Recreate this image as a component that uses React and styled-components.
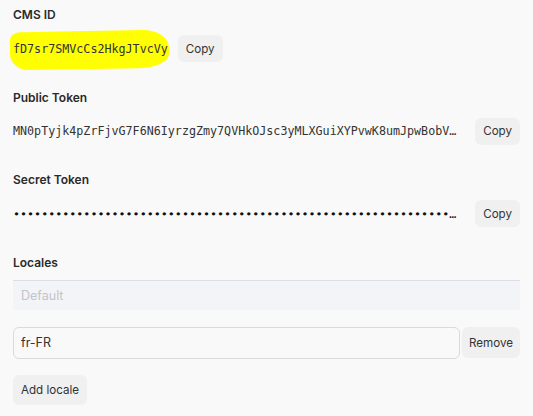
import React from "react";
import styled, { createGlobalStyle } from "styled-components";

const Global = createGlobalStyle`
  html, body { margin: 0; padding: 0; background: #f9f9f9; }
  body { font-family: Inter, "Noto Sans", sans-serif; color: #2b2b2b; }
  * { box-sizing: border-box; }
`;

const Page = styled.div`
  padding: 7px 13px 10px 13px;
  display: flex;
  flex-direction: column;
  gap: 27.5px;
  width: 533px;
`;

const Section = styled.section`
  display: flex;
  flex-direction: column;
  gap: ${(p) => p.$gap || 12}px;
`;

const Label = styled.div`
  font-size: 12px;
  font-weight: 600;
  line-height: 16px;
  color: #2a2a2a;
`;

const Row = styled.div`
  display: flex;
  align-items: center;
  gap: ${(p) => p.$gap || 10}px;
  height: 27px;
`;

const Mono = styled.span`
  font-family: "DejaVu Sans Mono", "Liberation Mono", monospace;
  font-size: 11.7px;
  color: ${(p) => (p.$secret ? "#111" : "#333")};
  white-space: nowrap;
  overflow: hidden;
  text-overflow: ellipsis;
  min-width: 0;
  ${(p) => (p.$fill ? "flex: 1;" : "")}
`;

const Highlight = styled.span`
  position: relative;
  display: inline-flex;
  &::before {
    content: "";
    position: absolute;
    left: -3px;
    right: -1px;
    top: -11px;
    bottom: -13px;
    background: #ffff00;
    border-radius: 10px 26px 30px 18px / 8px 18px 14px 16px;
    transform: rotate(-1deg);
  }
  & > span {
    position: relative;
  }
`;

const Button = styled.button`
  font-family: Inter, "Noto Sans", sans-serif;
  font-size: 11.6px;
  color: #333;
  background: #f0f0f0;
  border: none;
  border-radius: 6px;
  height: ${(p) => p.$h || 27}px;
  padding: 0 ${(p) => p.$px || 8}px;
  flex-shrink: 0;
  cursor: pointer;
`;

const Locales = styled.div`
  display: flex;
  flex-direction: column;
  gap: ${(p) => p.$gap || 17}px;
`;

const DefaultField = styled.div`
  height: 30px;
  background: #f3f4f7;
  border-top: 1px solid #dcdee3;
  padding: 0 8px;
  display: flex;
  align-items: center;
  font-size: 12.5px;
  color: #c2c4ca;
`;

const LocaleRow = styled.div`
  display: flex;
  gap: 2px;
  align-items: center;
`;

const Input = styled.input`
  flex: 1;
  height: 32px;
  border: 1px solid #dadada;
  border-radius: 6px;
  background: #f9f9f9;
  padding: 0 7px;
  font-family: Inter, "Noto Sans", sans-serif;
  font-size: 12.5px;
  color: #333;
  outline: none;
`;

const Actions = styled.div`
  display: flex;
  margin-top: -1px;
`;

export default function App() {
  return (
    <>
      <Global />
      <Page>
        <Section>
          <Label>CMS ID</Label>
          <Row>
            <Highlight>
              <Mono>fD7sr7SMVcCs2HkgJTvcVy</Mono>
            </Highlight>
            <Button>Copy</Button>
          </Row>
        </Section>
        <Section>
          <Label>Public Token</Label>
          <Row $gap={12}>
            <Mono $fill>MN0pTyjk4pZrFjvG7F6N6IyrzgZmy7QVHkOJsc3yMLXGuiXYPvwK8umJpwBobVq9s2LxR4tW</Mono>
            <Button>Copy</Button>
          </Row>
        </Section>
        <Section>
          <Label>Secret Token</Label>
          <Row $gap={12}>
            <Mono $fill $secret>{"∙".repeat(90)}</Mono>
            <Button>Copy</Button>
          </Row>
        </Section>
        <Section $gap={9}>
          <Label>Locales</Label>
          <Locales>
            <DefaultField>Default</DefaultField>
            <LocaleRow>
              <Input defaultValue="fr-FR" />
              <Button $h={31} $px={7}>Remove</Button>
            </LocaleRow>
            <Actions>
              <Button $h={30} $px={8}>Add locale</Button>
            </Actions>
          </Locales>
        </Section>
      </Page>
    </>
  );
}
